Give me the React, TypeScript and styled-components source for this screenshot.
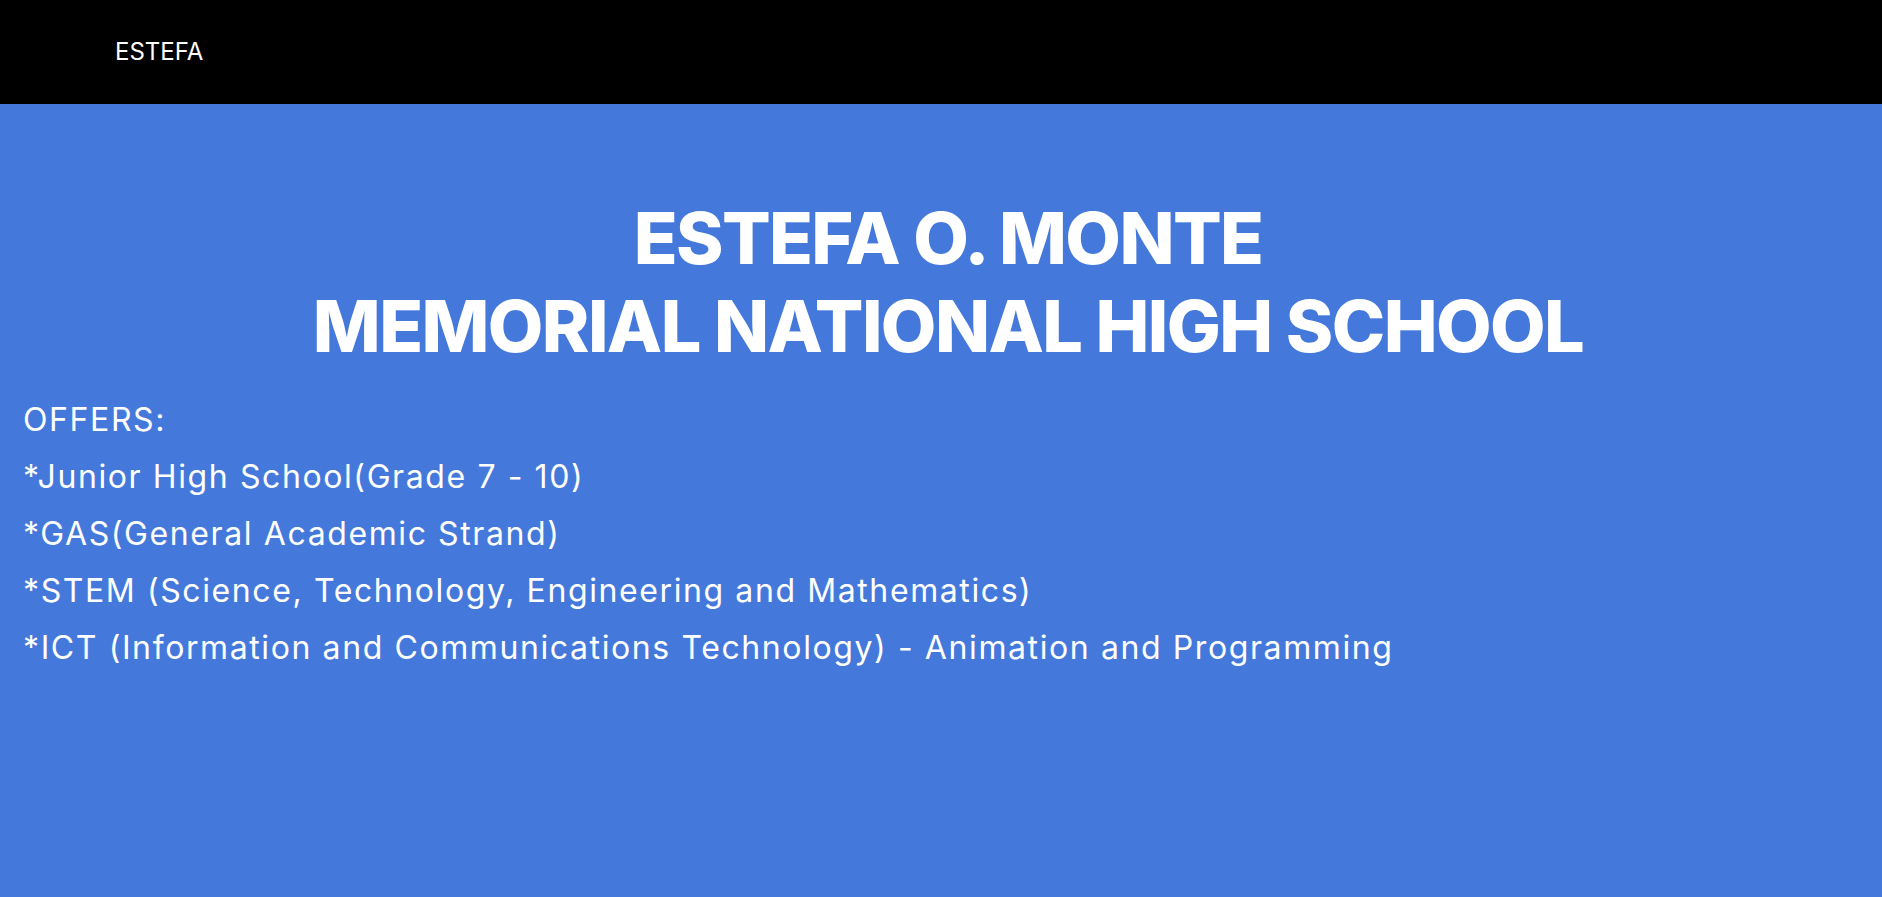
import React from "react";
import styled, { createGlobalStyle } from "styled-components";

const GlobalStyle = createGlobalStyle`
  html, body {
    margin: 0;
    padding: 0;
    background: #4479db;
  }
  body {
    font-family: Inter, "Liberation Sans", sans-serif;
    color: #ffffff;
  }
  * { box-sizing: border-box; }
`;

const Page = styled.div`
  min-height: 100vh;
  display: flex;
  flex-direction: column;
  background: #4479db;
`;

const NavBar = styled.header`
  height: 104px;
  background: #000000;
  display: flex;
  align-items: center;
  padding-left: 115px;
`;

const Brand = styled.span`
  font-family: Inter, "Liberation Sans", sans-serif;
  font-size: 24px;
  color: #ffffff;
  margin-top: -2px;
`;

const Hero = styled.main`
  display: flex;
  flex-direction: column;
  padding: 90px 23px 0;
`;

const Title = styled.h1`
  margin: 0;
  padding-left: 14px;
  text-align: center;
  font-family: Inter, "Liberation Sans", sans-serif;
  font-weight: 800;
  font-size: 72px;
  line-height: 88px;
  letter-spacing: -1.6px;
  color: #ffffff;
`;

const OfferList = styled.div`
  display: flex;
  flex-direction: column;
  margin-top: 21px;
`;

const OfferLine = styled.p`
  margin: 0;
  font-family: Inter, "Liberation Sans", sans-serif;
  font-size: 32px;
  line-height: 57px;
  letter-spacing: 1.6px;
  color: #ffffff;
`;

const offers = [
  "OFFERS:",
  "*Junior High School(Grade 7 - 10)",
  "*GAS(General Academic Strand)",
  "*STEM (Science, Technology, Engineering and Mathematics)",
  "*ICT (Information and Communications Technology) - Animation and Programming",
];

export default function App() {
  return (
    <Page>
      <GlobalStyle />
      <NavBar>
        <Brand>ESTEFA</Brand>
      </NavBar>
      <Hero>
        <Title>
          ESTEFA O. MONTE
          <br />
          MEMORIAL NATIONAL HIGH SCHOOL
        </Title>
        <OfferList>
          {offers.map((o) => (
            <OfferLine key={o}>{o}</OfferLine>
          ))}
        </OfferList>
      </Hero>
    </Page>
  );
}
